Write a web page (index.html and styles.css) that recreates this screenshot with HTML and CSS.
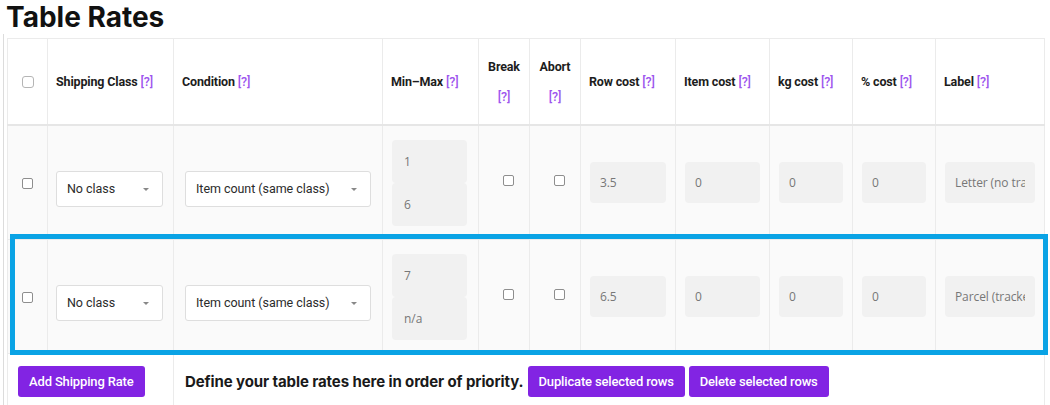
FILE: index.html
```html
<!DOCTYPE html>
<html>
<head>
<meta charset="utf-8">
<link rel="stylesheet" href="styles.css">
</head>
<body>
<h1 class="title">Table Rates</h1>
<div class="wrap">
<table class="rates">
<colgroup>
<col class="w40"><col class="w126"><col class="w209"><col class="w96"><col class="w51"><col class="w51"><col class="w95"><col class="w94"><col class="w83"><col class="w83"><col class="w109">
</colgroup>
<thead>
<tr>
<th class="c-check"><span class="cb cb-head"></span></th>
<th>Shipping Class <span class="help">[?]</span></th>
<th>Condition <span class="help">[?]</span></th>
<th>Min–Max <span class="help">[?]</span></th>
<th class="c-center">Break<br><span class="help">[?]</span></th>
<th class="c-center">Abort<br><span class="help">[?]</span></th>
<th>Row cost <span class="help">[?]</span></th>
<th>Item cost <span class="help">[?]</span></th>
<th>kg cost <span class="help">[?]</span></th>
<th>% cost <span class="help">[?]</span></th>
<th>Label <span class="help">[?]</span></th>
</tr>
</thead>
<tbody>
<tr class="row">
<td class="c-check"><span class="cb"></span></td>
<td><div class="select sel-class">No class<span class="caret"></span></div></td>
<td><div class="select sel-cond">Item count (same class)<span class="caret"></span></div></td>
<td class="c-mm"><div class="mm">1</div><div class="mm">6</div></td>
<td class="c-flag"><span class="cb cb-flag"></span></td>
<td class="c-flag"><span class="cb cb-flag"></span></td>
<td><div class="field">3.5</div></td>
<td><div class="field">0</div></td>
<td><div class="field">0</div></td>
<td><div class="field">0</div></td>
<td><input class="field field-input" type="text" readonly value="Letter (no tracking)"></td>
</tr>
<tr class="row highlight">
<td class="c-check"><span class="cb"></span></td>
<td><div class="select sel-class">No class<span class="caret"></span></div></td>
<td><div class="select sel-cond">Item count (same class)<span class="caret"></span></div></td>
<td class="c-mm"><div class="mm">7</div><div class="mm">n/a</div></td>
<td class="c-flag"><span class="cb cb-flag"></span></td>
<td class="c-flag"><span class="cb cb-flag"></span></td>
<td><div class="field">6.5</div></td>
<td><div class="field">0</div></td>
<td><div class="field">0</div></td>
<td><div class="field">0</div></td>
<td><input class="field field-input" type="text" readonly value="Parcel (tracked)"></td>
</tr>
</tbody>
<tfoot>
<tr class="foot">
<td colspan="2"><button class="btn">Add Shipping Rate</button></td>
<td colspan="9"><span class="note">Define your table rates here in order of priority.</span> <button class="btn">Duplicate selected rows</button> <button class="btn">Delete selected rows</button></td>
</tr>
</tfoot>
</table>
</div>
</body>
</html>
```
FILE: styles.css
```css
html, body {
  margin: 0;
  padding: 0;
  background: #ffffff;
}
body {
  font-family: Roboto, "Liberation Sans", sans-serif;
  color: #222;
}
.title {
  margin: 0;
  padding-left: 6px;
  font-family: Inter, "Liberation Sans", sans-serif;
  font-weight: 700;
  font-size: 28px;
  line-height: 34px;
  letter-spacing: 0;
  color: #111;
}
.wrap {
  margin-left: 3px;
  border-left: 1px solid #dcdcdc;
  padding: 4px 0 0 3px;
}
.w40 { width: 40px; }
.w126 { width: 126px; }
.w209 { width: 209px; }
.w96 { width: 96px; }
.w51 { width: 51px; }
.w95 { width: 95px; }
.w94 { width: 94px; }
.w83 { width: 83px; }
.w109 { width: 109px; }
.rates {
  border-collapse: collapse;
  table-layout: fixed;
  width: 1037px;
  border-top: 1px solid #dedede;
}
.rates th, .rates td {
  border: 1px solid #ebebeb;
  padding: 0 9px;
  text-align: left;
  vertical-align: middle;
}
.rates th {
  height: 85px;
  font-size: 12.5px;
  font-weight: 700;
  line-height: 30px;
  letter-spacing: -0.15px;
  color: #1d1d1d;
  background: #fff;
  padding-left: 8px;
}
.rates th.c-center {
  text-align: center;
  padding: 0;
}
.rates td.c-flag {
  text-align: center;
  padding: 0 0 0 8px;
}
.rates .c-check {
  padding: 0;
  text-align: center;
}
.help {
  color: #9d55ee;
  font-weight: 500;
}
.rates thead tr {
  border-bottom: 2px solid #e6e6e6;
}
.row td {
  height: 113px;
  background: #fafafa;
  font-size: 12px;
}
.cb {
  display: inline-block;
  width: 9px;
  height: 9px;
  border: 1px solid #8e8e8e;
  border-radius: 2px;
  background: #fff;
  vertical-align: middle;
}
.cb-flag {
  margin-bottom: 5px;
}
.cb-head {
  width: 10px;
  height: 10px;
  border-color: #b5b5b5;
  border-radius: 3px;
}
.select {
  position: relative;
  height: 34px;
  border: 1px solid #dedede;
  border-radius: 3px;
  background: #fff;
  color: #2b2b2b;
  font-size: 12.5px;
  letter-spacing: -0.05px;
  line-height: 34px;
  padding-left: 10px;
  margin-top: 12px;
  white-space: nowrap;
}
.sel-class {
  margin-left: -1px;
  margin-right: 1px;
}
.sel-cond {
  margin-left: 2px;
  margin-right: 2px;
}
.caret {
  position: absolute;
  right: 13px;
  top: 16px;
  width: 0;
  height: 0;
  border-left: 3px solid transparent;
  border-right: 3px solid transparent;
  border-top: 3px solid #888;
}
.c-mm {
  padding: 0 11px 0 9px !important;
}
.mm {
  height: 43px;
  line-height: 43px;
  background: #f1f1f1;
  border-radius: 4px;
  padding-left: 12px;
  color: #777;
  font-family: "Open Sans", Roboto, sans-serif;
  font-size: 12px;
}
.field {
  display: block;
  box-sizing: border-box;
  width: 100%;
  height: 41px;
  line-height: 41px;
  background: #f1f1f1;
  border: none;
  border-radius: 4px;
  margin: 0;
  padding: 0 10px;
  color: #777;
  font-family: "Open Sans", Roboto, sans-serif;
  font-size: 12px;
  letter-spacing: -0.1px;
  white-space: nowrap;
  overflow: hidden;
  outline: none;
}
.highlight {
  position: relative;
}
.highlight::after {
  content: "";
  position: absolute;
  left: 2px;
  right: -3px;
  top: -6px;
  bottom: -1px;
  border: 5px solid #0aa3e5;
  pointer-events: none;
}
.foot td {
  height: 50px;
  padding: 12px 10px 7px;
  vertical-align: top;
  background: #fff;
  border-bottom: none;
}
.foot td:last-child {
  padding-left: 11px;
}
.btn {
  height: 31px;
  padding: 0 11px;
  border: none;
  border-radius: 3px;
  background: #8224e3;
  color: #fff;
  font-family: Roboto, "Liberation Sans", sans-serif;
  font-size: 13px;
  font-weight: 500;
  letter-spacing: -0.15px;
  vertical-align: middle;
}
.note {
  font-family: Inter, "Liberation Sans", sans-serif;
  font-weight: 700;
  font-size: 15px;
  letter-spacing: -0.1px;
  color: #1a1a1a;
  vertical-align: middle;
}
```
